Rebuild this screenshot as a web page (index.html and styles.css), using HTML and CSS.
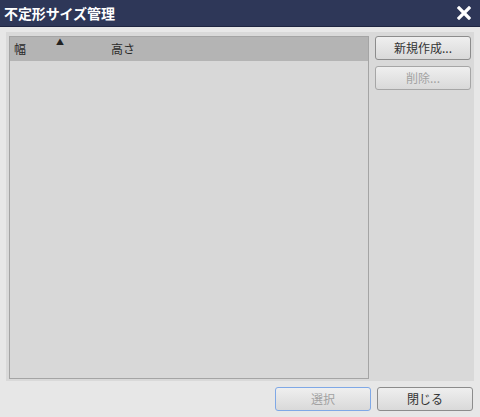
FILE: index.html
```html
<!DOCTYPE html>
<html lang="ja">
<head>
<meta charset="utf-8">
<link rel="stylesheet" href="styles.css">
</head>
<body>
<div class="dialog">
  <div class="titlebar">
    <span class="title">不定形サイズ管理</span>
    <svg class="close" width="14" height="14" viewBox="0 0 14 14"><path d="M2 2L12 12M12 2L2 12" stroke="#fff" stroke-width="3.2" stroke-linecap="square"/></svg>
  </div>
  <div class="panel">
    <div class="list">
      <div class="list-header">
        <div class="col col-w">幅<span class="sort">▲</span></div>
        <div class="col col-h">高さ</div>
      </div>
      <div class="list-body"></div>
    </div>
    <div class="side">
      <button class="btn">新規作成...</button>
      <button class="btn disabled">削除...</button>
    </div>
  </div>
  <div class="footer">
    <button class="btn disabled focus">選択</button>
    <button class="btn">閉じる</button>
  </div>
</div>
</body>
</html>
```
FILE: styles.css
```css
html, body {
  margin: 0;
  padding: 0;
}
body {
  background: #e7e7e7;
  font-family: "Noto Sans CJK JP", "Noto Sans", sans-serif;
  font-size: 12px;
  color: #333;
  width: 480px;
  height: 417px;
  overflow: hidden;
}
.titlebar {
  height: 26px;
  background: #2e3758;
  border-bottom: 1px solid #1e2440;
  display: flex;
  align-items: center;
  justify-content: space-between;
  padding: 0 9px 0 4px;
}
.title {
  color: #fff;
  font-weight: bold;
  font-size: 14px;
  line-height: 26px;
  letter-spacing: -0.1px;
}
.close {
  display: block;
}
.panel {
  margin: 5px 6px 0 6px;
  height: 343px;
  background: #d9d9d9;
  padding: 4px 3px 2px 3px;
  display: flex;
  gap: 6px;
}
.list {
  width: 358px;
  border: 1px solid #a4a4a4;
  background: #d8d8d8;
  display: flex;
  flex-direction: column;
}
.list-header {
  height: 24px;
  background: #b4b4b4;
  display: flex;
  align-items: center;
}
.col {
  line-height: 24px;
  color: #2a2a2a;
}
.col-w {
  width: 97px;
  padding-left: 4px;
  position: relative;
}
.sort {
  position: absolute;
  left: 46px;
  top: -7px;
  font-size: 8px;
  color: #222;
}
.list-body {
  flex: 1;
}
.side {
  display: flex;
  flex-direction: column;
  gap: 6px;
}
.btn {
  width: 96px;
  height: 24px;
  border: 1px solid #8c8c8c;
  border-radius: 3px;
  background: linear-gradient(#efefef, #d9d9d9);
  font-family: "Noto Sans CJK JP", "Noto Sans", sans-serif;
  font-size: 12px;
  color: #333;
  padding: 0;
  line-height: 22px;
}
.btn.disabled {
  color: #a2a2a2;
  border-color: #a6a6a6;
}
.btn.focus {
  border-color: #7fa8e6;
}
.footer {
  display: flex;
  justify-content: flex-end;
  gap: 6px;
  padding: 6px 7px 0 0;
}
```
